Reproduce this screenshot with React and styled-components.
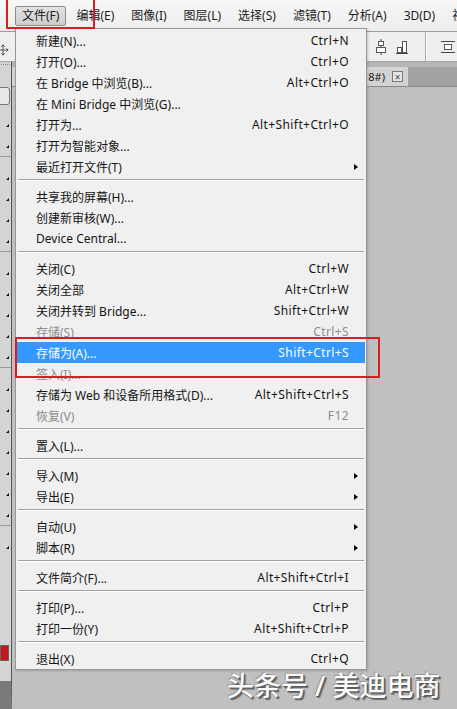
import React from 'react';
import styled, { createGlobalStyle } from 'styled-components';
import { Move } from 'lucide-react';

const topMenus = [
  { label: '文件(F)', active: true },
  { label: '编辑(E)' },
  { label: '图像(I)' },
  { label: '图层(L)' },
  { label: '选择(S)' },
  { label: '滤镜(T)' },
  { label: '分析(A)' },
  { label: '3D(D)' },
  { label: '视图(V)' },
];

const SEP = 'sep';

const fileMenu = [
  { label: '新建(N)...', shortcut: 'Ctrl+N' },
  { label: '打开(O)...', shortcut: 'Ctrl+O' },
  { label: '在 Bridge 中浏览(B)...', shortcut: 'Alt+Ctrl+O' },
  { label: '在 Mini Bridge 中浏览(G)...' },
  { label: '打开为...', shortcut: 'Alt+Shift+Ctrl+O' },
  { label: '打开为智能对象...' },
  { label: '最近打开文件(T)', sub: true },
  SEP,
  { label: '共享我的屏幕(H)...' },
  { label: '创建新审核(W)...' },
  { label: 'Device Central...' },
  SEP,
  { label: '关闭(C)', shortcut: 'Ctrl+W' },
  { label: '关闭全部', shortcut: 'Alt+Ctrl+W' },
  { label: '关闭并转到 Bridge...', shortcut: 'Shift+Ctrl+W' },
  { label: '存储(S)', shortcut: 'Ctrl+S', disabled: true },
  { label: '存储为(A)...', shortcut: 'Shift+Ctrl+S', active: true },
  { label: '签入(I)...', disabled: true },
  { label: '存储为 Web 和设备所用格式(D)...', shortcut: 'Alt+Shift+Ctrl+S' },
  { label: '恢复(V)', shortcut: 'F12', disabled: true },
  SEP,
  { label: '置入(L)...' },
  SEP,
  { label: '导入(M)', sub: true },
  { label: '导出(E)', sub: true },
  SEP,
  { label: '自动(U)', sub: true },
  { label: '脚本(R)', sub: true },
  SEP,
  { label: '文件简介(F)...', shortcut: 'Alt+Shift+Ctrl+I' },
  SEP,
  { label: '打印(P)...', shortcut: 'Ctrl+P' },
  { label: '打印一份(Y)', shortcut: 'Alt+Shift+Ctrl+P' },
  SEP,
  { label: '退出(X)', shortcut: 'Ctrl+Q' },
];

// little tool buttons down the left edge (only their corner marks show)
const tools = [true, true, false, true, true, true, true, false, true, true, true, true, true, false, true, true, true, true, true, true, true, false, true];

const App = () => {
  return (
    <Screen>
      <GlobalStyle />
      <MenuBar>
        {topMenus.map((m) => (
          <TopItem key={m.label} $active={m.active}>
            {m.label}
          </TopItem>
        ))}
      </MenuBar>

      <OptionsBar>
        <MoveTool>
          <Move size={12} strokeWidth={1.6} />
        </MoveTool>
        <AlignGroup>
          <svg width="12" height="16" viewBox="0 0 12 16">
            <line x1="6" y1="0" x2="6" y2="16" stroke="#444" />
            <rect x="3.5" y="2.5" width="5" height="4" fill="#fff" stroke="#555" />
            <rect x="1.5" y="8.5" width="9" height="5" fill="#fff" stroke="#555" />
          </svg>
          <svg width="12" height="16" viewBox="0 0 12 16">
            <line x1="0" y1="14.5" x2="12" y2="14.5" stroke="#444" />
            <rect x="6.5" y="2.5" width="4" height="11" fill="#fff" stroke="#555" />
            <rect x="1.5" y="8.5" width="4" height="5" fill="#fff" stroke="#555" />
          </svg>
          <BarDivider />
          <svg width="26" height="16" viewBox="0 0 26 16">
            <line x1="0" y1="2.5" x2="14" y2="2.5" stroke="#444" />
            <line x1="0" y1="13.5" x2="14" y2="13.5" stroke="#444" />
            <rect x="3.5" y="5.5" width="7" height="5" fill="#fff" stroke="#555" />
            <line x1="18" y1="8.5" x2="26" y2="8.5" stroke="#444" />
          </svg>
        </AlignGroup>
      </OptionsBar>

      <Body>
        <ToolColumn>
          <Grip />
          <ToolBox />
          {tools.map((t, i) => (t ? <Tool key={i} /> : <ToolGap key={i} />))}
          <Swatch />
        </ToolColumn>
        <Workspace>
          <TabBar>
            <DocTab>
              8#)
              <CloseBox>×</CloseBox>
            </DocTab>
          </TabBar>
          <Canvas />
        </Workspace>
      </Body>

      <Dropdown>
        {fileMenu.map((item, i) =>
          item === SEP ? (
            <Separator key={i} />
          ) : (
            <MenuRow key={i} $active={item.active} $disabled={item.disabled}>
              <RowLabel>{item.label}</RowLabel>
              <RowShortcut>{item.shortcut}</RowShortcut>
              <ArrowCell>{item.sub && <SubArrow />}</ArrowCell>
            </MenuRow>
          )
        )}
      </Dropdown>

      <RedFrame style={{ left: 6, top: -2, width: 89, height: 31 }} />
      <RedFrame style={{ left: 15, top: 337, width: 365, height: 41 }} />

      <Watermark>头条号 / 美迪电商</Watermark>
    </Screen>
  );
};

export default App;

const GlobalStyle = createGlobalStyle`
  html, body {
    margin: 0;
    padding: 0;
    background: #c0c0c0;
  }
  body {
    font-family: "Noto Sans", "Noto Sans CJK SC", sans-serif;
  }
`;

const Screen = styled.div`
  position: relative;
  width: 457px;
  height: 709px;
  overflow: hidden;
  display: flex;
  flex-direction: column;
  background: #c0c0c0;
`;

const MenuBar = styled.div`
  display: flex;
  align-items: center;
  gap: 3px;
  height: 32px;
  padding: 1px 0 0 15px;
  box-sizing: border-box;
  background: linear-gradient(#f7f7f7, #ededed);
  border-bottom: 1px solid #9c9c9c;
  white-space: nowrap;
  flex: none;
`;

const TopItem = styled.div`
  height: 18px;
  line-height: 18px;
  padding: 0 6px;
  font-size: 12px;
  color: #1b1b1b;
  border: 1px solid ${(p) => (p.$active ? '#8c8c8c' : 'transparent')};
  border-radius: 2px;
  background: ${(p) => (p.$active ? 'linear-gradient(#e2e2e2, #cdcdcd)' : 'transparent')};
`;

const OptionsBar = styled.div`
  display: flex;
  align-items: center;
  height: 29px;
  background: #efefef;
  border-bottom: 1px solid #a6a6a6;
  flex: none;
`;

const MoveTool = styled.div`
  display: flex;
  margin: 6px 0 0 -3px;
  color: #333;
`;

const AlignGroup = styled.div`
  display: flex;
  align-items: center;
  gap: 9px;
  margin-left: 366px;
  height: 100%;
  svg {
    flex: none;
  }
`;

const BarDivider = styled.div`
  width: 1px;
  height: 100%;
  margin: 0 6px 0 8px;
  background: #a8a8a8;
  box-shadow: 1px 0 0 #fff;
`;

const Body = styled.div`
  display: flex;
  flex: 1;
  min-height: 0;
`;

const ToolColumn = styled.div`
  width: 11px;
  flex: none;
  display: flex;
  flex-direction: column;
  background: #d4d4d4;
  border-right: 1px solid #555;
  border-bottom: 28px solid #7a7a7a;
  overflow: hidden;
`;

const Grip = styled.div`
  height: 4px;
  margin: 2px 1px 18px;
  border-top: 1px dotted #888;
`;

const ToolBox = styled.div`
  height: 16px;
  margin: 0 1px 6px -3px;
  border: 1px solid #777;
  border-radius: 3px;
  background: #e8e8e8;
`;

const Tool = styled.div`
  position: relative;
  height: 21px;
  flex: none;
  &::after {
    content: '';
    position: absolute;
    right: 2px;
    bottom: 5px;
    border-left: 3px solid transparent;
    border-bottom: 3px solid #111;
  }
`;

const ToolGap = styled.div`
  height: 7px;
  flex: none;
  border-top: 1px solid #9a9a9a;
  margin-top: 3px;
`;

const Swatch = styled.div`
  height: 16px;
  width: 9px;
  margin-top: auto;
  margin-bottom: 20px;
  background: #c4161c;
  border: 1px solid #666;
  box-sizing: border-box;
  flex: none;
`;

const Workspace = styled.div`
  flex: 1;
  display: flex;
  flex-direction: column;
  padding-top: 5px;
  background: #b6b6b6;
`;

const TabBar = styled.div`
  display: flex;
  height: 19px;
  background: #a2a2a2;
  border-bottom: 1px solid #8a8a8a;
  flex: none;
`;

const DocTab = styled.div`
  display: flex;
  align-items: center;
  justify-content: flex-end;
  width: 396px;
  padding-right: 5px;
  box-sizing: border-box;
  background: #d3d3d3;
  font-size: 11px;
  color: #222;
  white-space: nowrap;
`;

const CloseBox = styled.span`
  display: inline-flex;
  align-items: center;
  justify-content: center;
  width: 9px;
  height: 9px;
  margin-left: 7px;
  border: 1px solid #777;
  font-size: 10px;
  line-height: 1;
  color: #444;
  background: #e4e4e4;
`;

const Canvas = styled.div`
  flex: 1;
  background: #c0c0c0;
`;

const Dropdown = styled.div`
  position: absolute;
  left: 15px;
  top: 28px;
  width: 352px;
  box-sizing: border-box;
  padding: 1px 0 0;
  background: #f0f0f0;
  border: 1px solid #979797;
  box-shadow: 1px 1px 2px rgba(0, 0, 0, 0.18);
  font-size: 12px;
`;

const MenuRow = styled.div`
  display: flex;
  align-items: center;
  height: 21px;
  padding-left: 20px;
  white-space: nowrap;
  color: ${(p) => (p.$active ? '#fff' : p.$disabled ? '#8e8e8e' : '#151515')};
  background: ${(p) => (p.$active ? '#3399ff' : 'transparent')};
  margin-right: 1px;
`;

const RowLabel = styled.span`
  flex: 1;
`;

const RowShortcut = styled.span`
  letter-spacing: 0.4px;
`;

const ArrowCell = styled.span`
  width: 16px;
  height: 21px;
  display: flex;
  align-items: center;
  flex: none;
`;

const SubArrow = styled.span`
  margin-left: 5px;
  border-top: 3.5px solid transparent;
  border-bottom: 3.5px solid transparent;
  border-left: 4px solid #000;
`;

const Separator = styled.div`
  height: 9px;
  box-sizing: border-box;
  padding-top: 2px;
  margin: 0 2px;
  &::before {
    content: '';
    display: block;
    height: 1px;
    background: #a0a0a0;
    border-bottom: 1px solid #fff;
  }
`;

const RedFrame = styled.div`
  position: absolute;
  box-sizing: border-box;
  border: 2px solid #dc1c22;
  pointer-events: none;
`;

const Watermark = styled.div`
  position: absolute;
  left: 227px;
  top: 672px;
  font-family: "Noto Sans", "Noto Sans CJK SC", sans-serif;
  font-size: 27px;
  font-weight: 500;
  line-height: 1;
  color: #fafafa;
  white-space: nowrap;
  text-shadow: 1px 1px 0 #5a5a5a, 2px 2px 1px rgba(0, 0, 0, 0.45), -1px -1px 0 #9a9a9a;
`;
